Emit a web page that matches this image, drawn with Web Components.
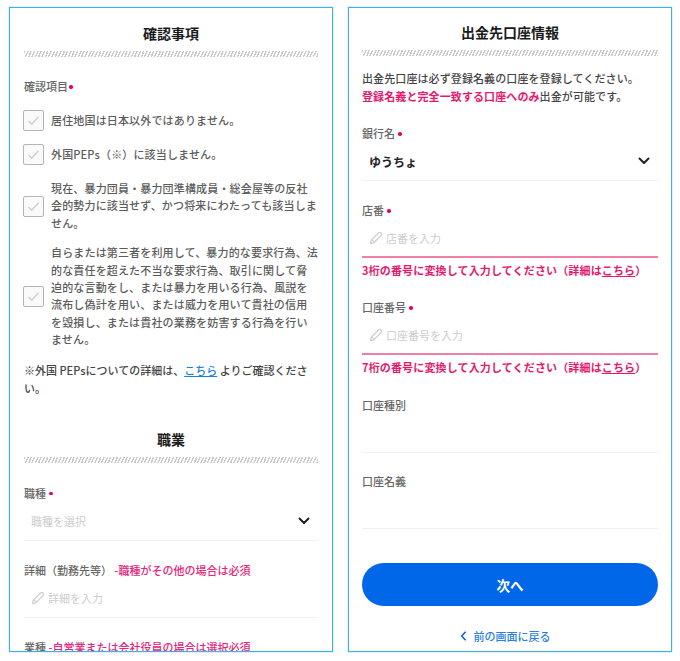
<!DOCTYPE html>
<html lang="ja">
<head>
<meta charset="utf-8">
<title>出金先口座情報</title>
<style>
  html, body { margin: 0; background: #fff; }
  body {
    display: flex;
    gap: 15px;
    width: 680px;
    height: 661px;
    box-sizing: border-box;
    padding: 7px 7px 8px 9px;
    overflow: hidden;
    font-family: "Noto Sans CJK JP", "Noto Sans", sans-serif;
    color: #555;
    font-size: 11px;
  }
</style>
</head>
<body>
  <form-panel>
    <section-heading>確認事項</section-heading>
    <field-label required style="margin-top:20px">確認項目</field-label>
    <check-row style="margin-top:15px">居住地国は日本以外ではありません。</check-row>
    <check-row style="margin-top:13px">外国PEPs（※）に該当しません。</check-row>
    <check-row style="margin-top:15px">現在、暴力団員・暴力団準構成員・総会屋等の反社会的勢力に該当せず、かつ将来にわたっても該当しません。</check-row>
    <check-row style="margin-top:12px">自らまたは第三者を利用して、暴力的な要求行為、法的な責任を超えた不当な要求行為、取引に関して脅迫的な言動をし、または暴力を用いる行為、風説を流布し偽計を用い、または威力を用いて貴社の信用を毀損し、または貴社の業務を妨害する行為を行いません。</check-row>
    <info-note style="margin-top:12px">※外国 PEPsについての詳細は、<a href="#">こちら</a> よりご確認くださ<br>い。</info-note>
    <section-heading style="margin-top:32px">職業</section-heading>
    <form-field required kind="select" placeholder="職種を選択" style="margin-top:21px">職種</form-field>
    <form-field kind="input" placeholder="詳細を入力" style="margin-top:20px">詳細（勤務先等）<span slot="hint">-職種がその他の場合は必須</span></form-field>
    <form-field kind="input" style="margin-top:20px">業種 <span slot="hint">-自営業または会社役員の場合は選択必須</span></form-field>
  </form-panel>

  <form-panel style="padding:14px 13px 0">
    <section-heading>出金先口座情報</section-heading>
    <info-note style="margin-top:13px;letter-spacing:.1px">出金先口座は必ず登録名義の口座を登録してください。<br><b>登録名義と完全一致する口座へのみ</b>出金が可能です。</info-note>
    <form-field required kind="select" value="ゆうちょ" style="margin-top:19px">銀行名</form-field>
    <form-field required kind="input" invalid placeholder="店番を入力" style="margin-top:20px">店番<span slot="error">3桁の番号に変換して入力してください（詳細は<u>こちら</u>）</span></form-field>
    <form-field required kind="input" invalid placeholder="口座番号を入力" style="margin-top:19px">口座番号<span slot="error">7桁の番号に変換して入力してください（詳細は<u>こちら</u>）</span></form-field>
    <form-field kind="plain" style="margin-top:20px">口座種別</form-field>
    <form-field kind="plain" style="margin-top:19px">口座名義</form-field>
    <primary-button style="margin-top:34px">次へ</primary-button>
    <back-link style="margin-top:21px">前の画面に戻る</back-link>
  </form-panel>

<script>
(() => {
  "use strict";

  const chevron = `
    <svg viewBox="0 0 12 8" width="12" height="8" aria-hidden="true">
      <path d="M1.5 1.5L6 6l4.5-4.5" fill="none" stroke="currentColor" stroke-width="2" stroke-linecap="round" stroke-linejoin="round"/>
    </svg>`;

  const pencil = `
    <svg viewBox="0 0 14 14" width="14" height="14" aria-hidden="true">
      <path d="M2.2 9.2L9.4 2a1.8 1.8 0 0 1 2.6 2.6l-7.2 7.2-3.3.7z" fill="none" stroke="currentColor" stroke-width="1.3" stroke-linejoin="round"/>
      <path d="M3 9l2.1 2.1" fill="none" stroke="currentColor" stroke-width="1.1"/>
    </svg>`;

  const define = (name, css, html, init) => {
    customElements.define(name, class extends HTMLElement {
      connectedCallback() {
        if (this.shadowRoot) return;
        const shadow = this.attachShadow({ mode: "open" });
        shadow.innerHTML = `<style>${css}</style>${typeof html === "function" ? html(this) : html}`;
        if (init) init(this, shadow);
      }
    });
  };

  define("form-panel", `
    :host {
      display: block;
      flex: 0 0 324px;
      height: 645px;
      box-sizing: border-box;
      padding: 15px 14px 0 14px;
      border: 1px solid #3fb0e8;
      box-shadow: 0 0 1px #3fb0e8;
      overflow: hidden;
      background: #fff;
    }
  `, `<slot></slot>`);

  define("section-heading", `
    :host { display: block; }
    h2 {
      margin: 0;
      text-align: center;
      font-size: 14px;
      line-height: 20px;
      font-weight: 700;
      color: #1a1a1a;
    }
    .hatch {
      height: 6px;
      margin-top: 8px;
      background: repeating-linear-gradient(115deg, #cbcbcb 0 1.4px, #fff 1.4px 3px);
    }
  `, `<h2><slot></slot></h2><div class="hatch"></div>`);

  define("field-label", `
    :host {
      display: block;
      font-size: 11px;
      line-height: 18px;
      font-weight: 500;
      color: #666;
    }
    .req {
      display: inline-block;
      width: 3.5px;
      height: 3.5px;
      margin-left: 1px;
      border-radius: 50%;
      background: #e8005a;
      vertical-align: .22em;
    }
    ::slotted(span) { color: #e6247a; }
  `, (host) => `<slot></slot>${host.hasAttribute("required") ? '<span class="req"></span>' : ""}<slot name="hint"></slot>`);

  define("check-row", `
    :host {
      display: flex;
      align-items: center;
      gap: 7px;
      font-size: 11px;
      line-height: 17.4px;
      font-weight: 500;
      color: #5c5c5c;
      letter-spacing: .16px;
    }
    .box {
      flex: 0 0 auto;
      width: 21px;
      height: 21px;
      margin-left: -1px;
      box-sizing: border-box;
      display: grid;
      place-items: center;
      border: 1.5px solid #b4b4b4;
      border-radius: 2px;
      background: #fafafa;
      color: #cfcfcf;
    }
    .text { flex: 1; min-width: 0; }
  `, `
    <span class="box">
      <svg viewBox="0 0 14 12" width="13" height="11" aria-hidden="true">
        <path d="M1.5 6.5L5 10l7.5-8" fill="none" stroke="currentColor" stroke-width="1.6"/>
      </svg>
    </span>
    <span class="text"><slot></slot></span>`);

  define("info-note", `
    :host {
      display: block;
      font-size: 11px;
      line-height: 18px;
      font-weight: 500;
      color: #444;
    }
    ::slotted(a) { color: #1a7fe0; }
    ::slotted(b) { color: #e6196e; }
  `, `<slot></slot>`);

  define("form-field", `
    :host { display: block; }
    .control {
      height: 38px;
      box-sizing: content-box;
      display: flex;
      align-items: center;
      gap: 2px;
      padding: 0 8px 0 7px;
      border-bottom: 1px solid #f0f1f3;
      font-size: 11px;
      color: #cdcdcd;
    }
    :host([invalid]) .control {
      height: 37px;
      border-bottom: 2px solid #f07fa6;
    }
    .value { font-size: 12px; font-weight: 700; color: #222; }
    .grow { flex: 1; }
    .chev { color: #222; display: flex; }
    .pen { display: flex; margin-right: 1px; color: #d0d0d0; }
    .err {
      display: block;
      margin-top: 3px;
      font-size: 11px;
      line-height: 18px;
      font-weight: 700;
      letter-spacing: .15px;
      color: #e6196e;
    }
  `, (host) => {
    const kind = host.getAttribute("kind");
    const value = host.getAttribute("value");
    const placeholder = host.getAttribute("placeholder");
    const text = value
      ? `<span class="value">${value}</span>`
      : placeholder
        ? `<span>${placeholder}</span>`
        : "";
    return `
      <field-label ${host.hasAttribute("required") ? "required" : ""}>
        <slot></slot><slot name="hint" slot="hint"></slot>
      </field-label>
      <div class="control">
        ${kind === "input" && placeholder ? `<span class="pen">${pencil}</span>` : ""}
        ${text}
        <span class="grow"></span>
        ${kind === "select" ? `<span class="chev">${chevron}</span>` : ""}
      </div>
      ${host.hasAttribute("invalid") ? '<div class="err"><slot name="error"></slot></div>' : ""}`;
  });

  define("primary-button", `
    :host {
      display: flex;
      align-items: center;
      justify-content: center;
      height: 43px;
      border-radius: 22px;
      background: #0068e8;
      color: #fff;
      font-size: 13.5px;
      font-weight: 700;
    }
  `, `<slot></slot>`);

  define("back-link", `
    :host {
      display: flex;
      align-items: center;
      justify-content: center;
      gap: 7px;
      height: 18px;
      padding-right: 10px;
      font-size: 11px;
      font-weight: 500;
      color: #2a7fe0;
    }
    svg { color: #0f66d8; }
  `, `
    <svg viewBox="0 0 8 12" width="7" height="10" aria-hidden="true">
      <path d="M6 1.5L1.8 6 6 10.5" fill="none" stroke="currentColor" stroke-width="2" stroke-linecap="round" stroke-linejoin="round"/>
    </svg>
    <slot></slot>`);
})();
</script>
</body>
</html>
